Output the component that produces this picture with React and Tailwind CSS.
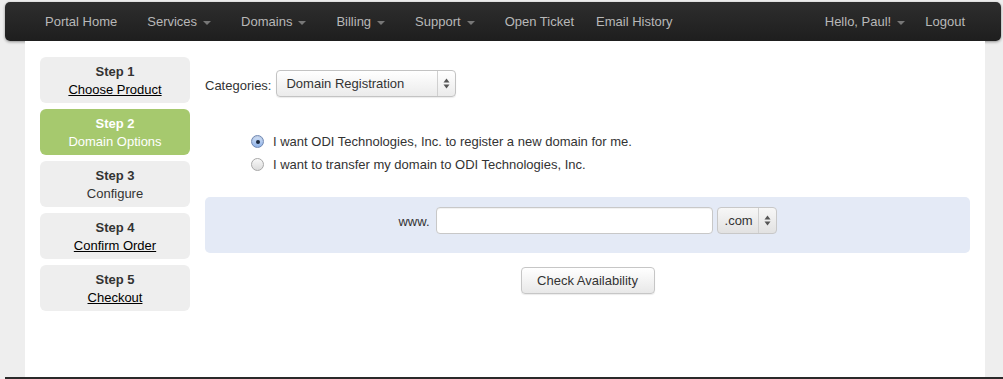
import React from 'react';

const navLeft = [
  { label: 'Portal Home', pad: 'px-[15px]' },
  { label: 'Services', caret: true, pad: 'px-[15px]' },
  { label: 'Domains', caret: true, pad: 'px-[15px]' },
  { label: 'Billing', caret: true, pad: 'px-[15px]' },
  { label: 'Support', caret: true, pad: 'px-[15px]' },
  { label: 'Open Ticket', pad: 'pl-[15px] pr-[7px]' },
  { label: 'Email History', pad: 'px-[15px]' },
];

const steps = [
  { n: 1, label: 'Choose Product', link: true },
  { n: 2, label: 'Domain Options', active: true },
  { n: 3, label: 'Configure' },
  { n: 4, label: 'Confirm Order', link: true },
  { n: 5, label: 'Checkout', link: true },
];

const Caret = () => (
  <span className="ml-[6px] inline-block h-0 w-0 border-x-[4px] border-t-[4px] border-x-transparent border-t-[#777] translate-y-[1px]" />
);

const UpDown = () => (
  <svg width="7" height="11" viewBox="0 0 7 11" className="text-[#555]">
    <path d="M3.5 0.5 L6.5 4.5 L0.5 4.5 Z" fill="currentColor" />
    <path d="M3.5 10.5 L6.5 6.5 L0.5 6.5 Z" fill="currentColor" />
  </svg>
);

const Radio = ({ checked }) =>
  checked ? (
    <span className="flex h-[13px] w-[13px] items-center justify-center rounded-full border border-[#6f88b3] bg-gradient-to-b from-[#d4e2f7] to-[#8fb2e6] shadow-[inset_0_1px_1px_rgba(0,0,0,0.1)]">
      <span className="h-[4px] w-[4px] rounded-full bg-[#1d2a3f]" />
    </span>
  ) : (
    <span className="h-[13px] w-[13px] rounded-full border border-[#a8a8a8] bg-gradient-to-b from-[#f8f8f8] to-[#dcdcdc]" />
  );

const App = () => {
  return (
    <div
      className="flex h-[379px] w-[1003px] flex-col overflow-hidden bg-[#eeeeee] text-[13px] text-[#333]"
      style={{ fontFamily: '"Liberation Sans", Arial, sans-serif' }}
    >
      {/* Top navbar */}
      <div className="ml-[5px] mr-[2px] mt-[2px] flex h-[39px] items-center justify-between rounded-[5px] bg-gradient-to-b from-[#2e2e2e] to-[#1e1e1e] pl-[25px] pr-[21px] shadow-[0_1px_3px_rgba(0,0,0,0.4)]">
        <div className="flex items-center">
          {navLeft.map((item) => (
            <a key={item.label} className={`flex items-center text-[#b8b8b8] ${item.pad}`}>
              {item.label}
              {item.caret && <Caret />}
            </a>
          ))}
        </div>
        <div className="flex items-center">
          <a className="flex items-center pl-[15px] pr-[5px] text-[#b8b8b8]">
            Hello, Paul!
            <Caret />
          </a>
          <a className="px-[15px] text-[#b8b8b8]">Logout</a>
        </div>
      </div>

      {/* Main panel */}
      <div className="ml-[25px] mr-[18px] flex flex-1 gap-[15px] bg-white px-[15px] pt-[16px]">
        {/* Steps */}
        <div className="flex w-[150px] shrink-0 flex-col gap-[6px]">
          {steps.map((s) => (
            <div
              key={s.n}
              className={`flex h-[46px] flex-col items-center justify-center rounded-[6px] pt-[1px] leading-[18px] ${
                s.active ? 'bg-[#a6c96e] text-white' : 'bg-[#eeeeee] text-[#333]'
              }`}
            >
              <div className="font-bold">Step {s.n}</div>
              <div className={s.link ? 'text-black underline' : ''}>{s.label}</div>
            </div>
          ))}
        </div>

        {/* Content */}
        <div className="flex flex-1 flex-col">
          <div className="mt-[13px] flex items-center">
            <span className="mr-[5px] translate-y-[2px]">Categories:</span>
            <div className="flex h-[27px] w-[180px] items-center rounded-[4px] border border-[#c3c3c3] bg-gradient-to-b from-white to-[#ebebeb] shadow-[0_1px_1px_rgba(0,0,0,0.08)]">
              <span className="flex-1 pl-[9px]">Domain Registration</span>
              <span className="flex h-full w-[18px] items-center justify-center border-l border-[#d0d0d0]">
                <UpDown />
              </span>
            </div>
          </div>

          <div className="ml-[46px] mt-[33px] flex flex-col">
            <label className="flex h-[23px] items-center gap-[9px]">
              <Radio checked />
              <span>I want ODI Technologies, Inc. to register a new domain for me.</span>
            </label>
            <label className="flex h-[23px] items-center gap-[9px]">
              <Radio />
              <span>I want to transfer my domain to ODI Technologies, Inc.</span>
            </label>
          </div>

          <div className="mt-[21px] flex h-[56px] items-start justify-center rounded-[5px] bg-[#e4eaf6] pt-[10px]">
            <span className="mr-[6px] leading-[27px] translate-y-[1px]">www.</span>
            <div className="h-[27px] w-[277px] rounded-[4px] border border-[#c8c8c8] bg-white shadow-[inset_0_1px_1px_rgba(0,0,0,0.06)]" />
            <div className="ml-[4px] flex h-[27px] w-[60px] items-center rounded-[4px] border border-[#c8c8c8] bg-gradient-to-b from-[#f7f7f7] to-[#e2e2e2]">
              <span className="flex-1 pl-[7px]">.com</span>
              <span className="flex h-full w-[18px] items-center justify-center border-l border-[#d0d0d0]">
                <UpDown />
              </span>
            </div>
          </div>

          <div className="mt-[14px] flex justify-center">
            <button className="h-[27px] w-[134px] rounded-[4px] border border-[#c6c6c6] bg-gradient-to-b from-white to-[#e8e8e8] text-[13px] text-[#333] shadow-[0_1px_1px_rgba(0,0,0,0.08)]">
              Check Availability
            </button>
          </div>
        </div>
      </div>

      {/* Footer edge */}
      <div className="ml-[5px] h-[2px] shrink-0 bg-[#2a2a2a]" />
    </div>
  );
};

export default App;
